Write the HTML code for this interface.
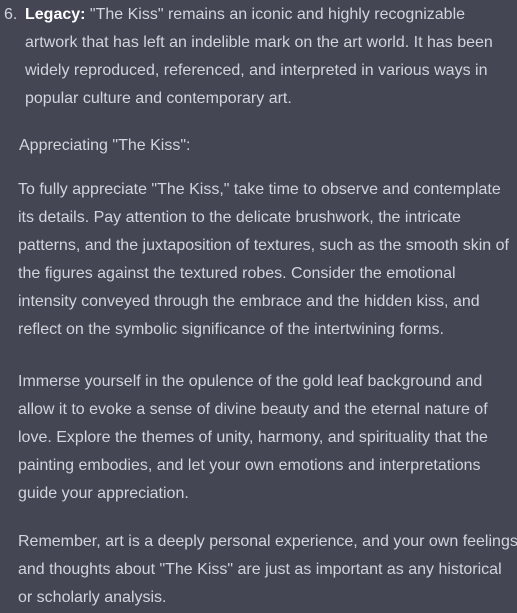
<!DOCTYPE html>
<html><head><meta charset="utf-8"><style>
html,body{margin:0;padding:0;}
body{width:517px;height:613px;background:#444654;overflow:hidden;position:relative;font-family:"Liberation Sans",sans-serif;font-size:16px;color:#d1d5db;}
.l{position:absolute;white-space:nowrap;line-height:20px;}
b{color:#fff;font-weight:bold;}
</style></head><body>
<div class="l" style="left:4px;top:5px">6.</div>
<div class="l" style="left:25px;top:5px"><b>Legacy:</b> "The Kiss" remains an iconic and highly recognizable</div>
<div class="l" style="left:25px;top:33px">artwork that has left an indelible mark on the art world. It has been</div>
<div class="l" style="left:25px;top:61px">widely reproduced, referenced, and interpreted in various ways in</div>
<div class="l" style="left:25px;top:89px">popular culture and contemporary art.</div>
<div class="l" style="left:19px;top:136px">Appreciating "The Kiss":</div>
<div class="l" style="left:18px;top:180px">To fully appreciate "The Kiss," take time to observe and contemplate</div>
<div class="l" style="left:18px;top:208px">its details. Pay attention to the delicate brushwork, the intricate</div>
<div class="l" style="left:18px;top:236px">patterns, and the juxtaposition of textures, such as the smooth skin of</div>
<div class="l" style="left:18px;top:264px">the figures against the textured robes. Consider the emotional</div>
<div class="l" style="left:18px;top:292px">intensity conveyed through the embrace and the hidden kiss, and</div>
<div class="l" style="left:18px;top:320px">reflect on the symbolic significance of the intertwining forms.</div>
<div class="l" style="left:18px;top:372px">Immerse yourself in the opulence of the gold leaf background and</div>
<div class="l" style="left:18px;top:400px">allow it to evoke a sense of divine beauty and the eternal nature of</div>
<div class="l" style="left:18px;top:428px">love. Explore the themes of unity, harmony, and spirituality that the</div>
<div class="l" style="left:18px;top:456px">painting embodies, and let your own emotions and interpretations</div>
<div class="l" style="left:18px;top:484px">guide your appreciation.</div>
<div class="l" style="left:18px;top:532px">Remember, art is a deeply personal experience, and your own feelings</div>
<div class="l" style="left:18px;top:560px">and thoughts about "The Kiss" are just as important as any historical</div>
<div class="l" style="left:18px;top:588px">or scholarly analysis.</div>
</body></html>
